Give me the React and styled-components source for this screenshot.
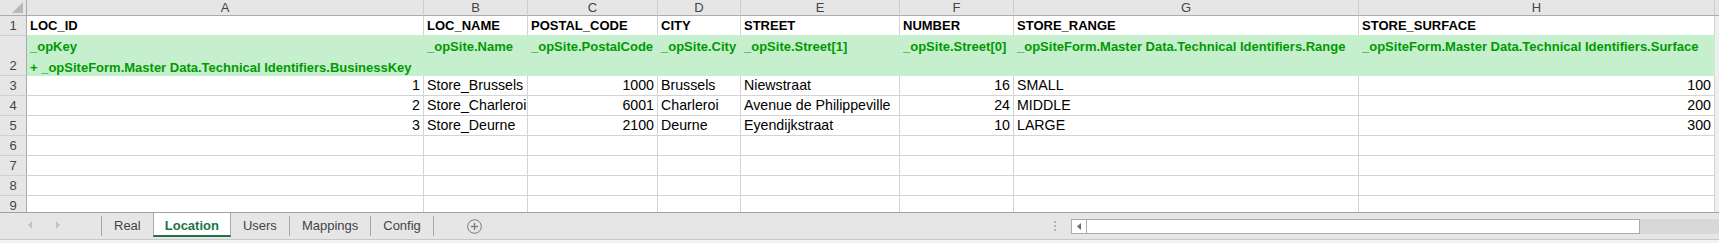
import React from 'react';
import styled, { createGlobalStyle, css } from 'styled-components';

const Global = createGlobalStyle`
  html, body { margin: 0; padding: 0; background: #fff; }
  body { font-family: "Liberation Sans", Arial, sans-serif; }
  * { box-sizing: border-box; }
`;

const Sheet = styled.div`
  width: 1719px;
  height: 243px;
  display: flex;
  flex-direction: column;
  overflow: hidden;
  font-family: "Liberation Sans", Arial, sans-serif;
`;

const Grid = styled.div`
  display: grid;
  grid-template-columns: 27px 397px 104px 130px 83px 159px 114px 345px 356px 1fr;
  grid-template-rows: 16px 20px 40px repeat(6, 20px) 16px;
  height: 212px;
`;

const Corner = styled.div`
  background: #e6e6e6;
  border-right: 1px solid #ababab;
  border-bottom: 1px solid #ababab;
  display: flex;
  align-items: flex-end;
  justify-content: flex-end;
  padding: 0 2px 1px 0;
`;

const ColHead = styled.div`
  background: #e6e6e6;
  border-right: 1px solid #cdcdcd;
  border-bottom: 1px solid #ababab;
  color: #444;
  font-size: 13px;
  line-height: 15px;
  text-align: center;
`;

const RowHead = styled.div`
  background: #e6e6e6;
  border-right: 1px solid #ababab;
  border-bottom: ${p => (p.$last ? 'none' : '1px solid #d0d0d0')};
  color: #444;
  font-size: 13px;
  line-height: 19px;
  display: flex;
  align-items: ${p => (p.$last ? 'flex-start' : 'flex-end')};
  justify-content: center;
`;

const Filler = styled.div`
  background: ${p => (p.$head ? '#e6e6e6' : '#efefef')};
  border-bottom: ${p => (p.$head ? '1px solid #ababab' : 'none')};
`;

const green = '#c6efce';
const grid = '#d4d4d4';

const Cell = styled.div`
  border-right: 1px solid ${p => (p.$fill ? green : grid)};
  border-bottom: ${p =>
    p.$last ? 'none' : `1px solid ${p.$fill || p.$aboveFill ? green : grid}`};
  background: ${p => (p.$fill ? green : '#fff')};
  color: ${p => (p.$fill ? '#009a00' : '#000')};
  font-weight: ${p => (p.$bold || p.$fill ? 700 : 400)};
  font-size: ${p => (p.$bold || p.$fill ? '13px' : '14.2px')};
  line-height: ${p => (p.$fill ? '21px' : '19px')};
  padding: 0 3px 0 3px;
  text-align: ${p => (p.$num ? 'right' : 'left')};
  white-space: pre;
  overflow: visible;
`;

const TabBar = styled.div`
  height: 31px;
  background: #e6e6e6;
  border-top: 1px solid #a0a0a0;
  display: flex;
  flex-direction: column;
`;

const TabRow = styled.div`
  height: 27px;
  display: flex;
  align-items: flex-start;
  border-bottom: 1px solid #c8c8c8;
`;

const BottomStrip = styled.div`
  flex: 1;
  background: #f3f3f3;
`;

const Nav = styled.div`
  width: 101px;
  height: 24px;
  display: flex;
  align-items: center;
  padding-left: 28px;
  gap: 23px;
`;

const Sep = styled.div`
  width: 1px;
  height: 20px;
  margin-top: 3px;
  background: #a6a6a6;
`;

const Tab = styled.div`
  height: 24px;
  padding: 0 12px;
  display: flex;
  align-items: center;
  font-size: 13px;
  color: #444;
  ${p =>
    p.$active &&
    css`
      background: #fff;
      color: #217346;
      font-weight: 700;
      padding: 0 11px;
      border-left: 1px solid #ababab;
      border-right: 1px solid #ababab;
      border-bottom: 2px solid #217346;
      padding-top: 2px;
    `}
`;

const AddButton = styled.div`
  margin-left: 33px;
  height: 24px;
  display: flex;
  align-items: center;
  padding-top: 2px;
`;

const Spacer = styled.div`
  flex: 1;
`;

const Dots = styled.div`
  width: 2px;
  height: 24px;
  display: flex;
  flex-direction: column;
  justify-content: center;
  gap: 2px;
  margin-right: 15px;
  padding-top: 2px;
  & > span {
    display: block;
    width: 2px;
    height: 2px;
    background: #b4b4b4;
  }
`;

const ScrollWrap = styled.div`
  height: 27px;
  display: flex;
  align-items: center;
  padding-bottom: 1px;
`;

const ScrollBox = styled.div`
  width: 569px;
  height: 15px;
  border: 1px solid #ababab;
  background: #fff;
  display: flex;
`;

const ScrollArrow = styled.div`
  width: 15px;
  height: 100%;
  border-right: 1px solid #ababab;
  display: flex;
  align-items: center;
  justify-content: center;
`;

const Track = styled.div`
  width: 79px;
  height: 15px;
  background: #d8d8d8;
`;

const letters = ['A', 'B', 'C', 'D', 'E', 'F', 'G', 'H'];
const headers = ['LOC_ID', 'LOC_NAME', 'POSTAL_CODE', 'CITY', 'STREET', 'NUMBER', 'STORE_RANGE', 'STORE_SURFACE'];
const mapping = [
  '_opKey\n+ _opSiteForm.Master Data.Technical Identifiers.BusinessKey',
  '_opSite.Name',
  '_opSite.PostalCode',
  '_opSite.City',
  '_opSite.Street[1]',
  '_opSite.Street[0]',
  '_opSiteForm.Master Data.Technical Identifiers.Range',
  '_opSiteForm.Master Data.Technical Identifiers.Surface',
];
const numeric = [true, false, true, false, false, true, false, true];
const data = [
  ['1', 'Store_Brussels', '1000', 'Brussels', 'Niewstraat', '16', 'SMALL', '100'],
  ['2', 'Store_Charleroi', '6001', 'Charleroi', 'Avenue de Philippeville', '24', 'MIDDLE', '200'],
  ['3', 'Store_Deurne', '2100', 'Deurne', 'Eyendijkstraat', '10', 'LARGE', '300'],
  ['', '', '', '', '', '', '', ''],
  ['', '', '', '', '', '', '', ''],
  ['', '', '', '', '', '', '', ''],
  ['', '', '', '', '', '', '', ''],
];

export default function App() {
  return (
    <Sheet>
      <Global />
      <Grid>
        <Corner>
          <svg width="12" height="12" viewBox="0 0 12 12">
            <polygon points="11,0 11,11 0,11" fill="#b9b9b9" />
          </svg>
        </Corner>
        {letters.map(l => (
          <ColHead key={l}>{l}</ColHead>
        ))}
        <Filler $head />

        <RowHead>1</RowHead>
        {headers.map(h => (
          <Cell key={h} $bold $aboveFill>
            {h}
          </Cell>
        ))}
        <Filler />

        <RowHead>2</RowHead>
        {mapping.map(m => (
          <Cell key={m} $fill>
            {m}
          </Cell>
        ))}
        <Filler />

        {data.map((row, ri) => {
          const last = ri === data.length - 1;
          return (
            <React.Fragment key={ri}>
              <RowHead $last={last}>{ri + 3}</RowHead>
              {row.map((v, ci) => (
                <Cell key={ci} $num={numeric[ci]} $last={last}>
                  {v}
                </Cell>
              ))}
              <Filler />
            </React.Fragment>
          );
        })}
      </Grid>

      <TabBar>
        <TabRow>
          <Nav>
            <svg width="5" height="8" viewBox="0 0 5 8">
              <polygon points="4,0 4,8 0,4" fill="#c4c4c4" />
            </svg>
            <svg width="5" height="8" viewBox="0 0 5 8">
              <polygon points="0,0 0,8 4,4" fill="#c4c4c4" />
            </svg>
          </Nav>
          <Sep />
          <Tab>Real</Tab>
          <Tab $active>Location</Tab>
          <Tab>Users</Tab>
          <Sep />
          <Tab>Mappings</Tab>
          <Sep />
          <Tab>Config</Tab>
          <Sep />
          <AddButton>
            <svg width="15" height="15" viewBox="0 0 15 15">
              <circle cx="7.5" cy="7.5" r="6.8" fill="none" stroke="#7a7a7a" strokeWidth="1" />
              <line x1="7.5" y1="4" x2="7.5" y2="11" stroke="#7a7a7a" strokeWidth="1.4" />
              <line x1="4" y1="7.5" x2="11" y2="7.5" stroke="#7a7a7a" strokeWidth="1.4" />
            </svg>
          </AddButton>
          <Spacer />
          <Dots>
            <span />
            <span />
            <span />
          </Dots>
          <ScrollWrap>
            <ScrollBox>
              <ScrollArrow>
                <svg width="4" height="7" viewBox="0 0 4 7">
                  <polygon points="4,0 4,7 0,3.5" fill="#6e6e6e" />
                </svg>
              </ScrollArrow>
            </ScrollBox>
            <Track />
          </ScrollWrap>
        </TabRow>
        <BottomStrip />
      </TabBar>
    </Sheet>
  );
}
